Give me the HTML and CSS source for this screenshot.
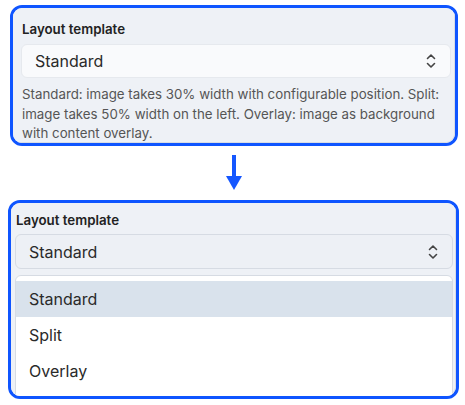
FILE: index.html
```html
<!DOCTYPE html>
<html>
<head>
<meta charset="utf-8">
<link rel="stylesheet" href="styles.css">
</head>
<body>
<div class="page">
  <div class="panel panel-top">
    <div class="shot shot-top">
      <div class="label">Layout template</div>
      <div class="select select-top">
        <span class="value">Standard</span>
        <svg class="chev" width="10" height="18" viewBox="0 0 10 18"><polyline points="1.5,6.5 5,3 8.5,6.5" /><polyline points="1.5,11.5 5,15 8.5,11.5" /></svg>
      </div>
      <p class="help">Standard: image takes 30% width with configurable position. Split: image takes 50% width on the left. Overlay: image as background with content overlay.</p>
    </div>
  </div>

  <div class="arrow-row">
    <svg width="20" height="54" viewBox="0 0 20 54"><rect x="8" y="9" width="4" height="22" fill="#1557ff"/><polygon points="2,30 18,30 10,44" fill="#1557ff"/></svg>
  </div>

  <div class="panel panel-bottom">
    <div class="shot shot-bottom">
      <div class="label">Layout template</div>
      <div class="select select-bottom">
        <span class="value">Standard</span>
        <svg class="chev" width="10" height="18" viewBox="0 0 10 18"><polyline points="1.5,6.5 5,3 8.5,6.5" /><polyline points="1.5,11.5 5,15 8.5,11.5" /></svg>
      </div>
      <div class="menu">
        <div class="item active">Standard</div>
        <div class="item">Split</div>
        <div class="item">Overlay</div>
      </div>
    </div>
  </div>
</div>
</body>
</html>
```

FILE: styles.css
```css
html, body {
  margin: 0;
  padding: 0;
  background: #ffffff;
}
body {
  font-family: Inter, "Noto Sans", "Liberation Sans", sans-serif;
  color: #222;
}
.page {
  padding-top: 5px;
}
.panel {
  box-sizing: border-box;
  border: 3px solid #0f55ff;
  border-radius: 12px;
  overflow: hidden;
  background: #eef1f6;
}
.panel-top {
  margin-left: 10px;
  width: 448px;
  height: 141px;
}
.panel-bottom {
  margin-left: 8px;
  width: 451px;
  height: 199px;
}
.shot {
  box-sizing: border-box;
  height: 100%;
  background: #eef1f6;
  border-right: 1px solid #d9dde4;
  border-bottom: 1px solid #d9dde4;
  border-radius: 0 0 9px 0;
}
.shot-top {
  padding: 13px 3px 0 8px;
}
.shot-bottom {
  padding: 9px 2px 0 4px;
}
.label {
  font-size: 13.3px;
  line-height: 16px;
  font-weight: 600;
  color: #222;
  padding-left: 1px;
}
.select {
  display: flex;
  align-items: center;
  justify-content: space-between;
  box-sizing: border-box;
  border-radius: 6px;
  font-size: 16px;
  color: #2a2a2a;
}
.select-top {
  margin-top: 7px;
  height: 34px;
  padding: 0 14px 0 13px;
  background: #f9fafc;
  border: 1px solid #e6e9ee;
}
.select-bottom {
  margin-top: 6px;
  height: 35px;
  padding: 0 14px 0 13px;
  background: #edf0f5;
  border: 1px solid #d6dbe3;
}
.chev polyline {
  fill: none;
  stroke: #444;
  stroke-width: 1.6;
  stroke-linecap: round;
  stroke-linejoin: round;
}
.help {
  margin: 7px 0 0 1px;
  font-size: 13.3px;
  line-height: 19.7px;
  color: #555;
}
.arrow-row {
  display: flex;
  justify-content: flex-start;
  padding-left: 224px;
  height: 54px;
}
.arrow-row svg {
  display: block;
}
.menu {
  margin-top: 6px;
  background: #ffffff;
  border: 1px solid #d6dbe3;
  border-radius: 6px;
  padding-top: 5px;
  height: 200px;
}
.item {
  height: 36px;
  line-height: 36px;
  padding-left: 13px;
  font-size: 16px;
  color: #2a2a2a;
}
.item.active {
  background: #d9e2ec;
}
```
